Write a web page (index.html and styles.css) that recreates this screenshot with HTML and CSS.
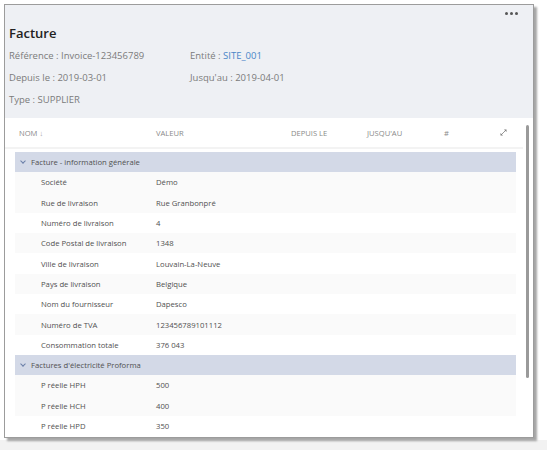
FILE: index.html
```html
<!DOCTYPE html>
<html lang="fr">
<head>
    <meta charset="UTF-8">
    <meta name="viewport" content="width=device-width, initial-scale=1.0">
    <title>Facture</title>

    <link rel="stylesheet" href="styles.css">
</head>
<body>
    <div id="panel">
        <div id="panel-head">
            <div class="menu-dots"><span></span><span></span><span></span></div>
            <h1>Facture</h1>
            <div class="info-grid">
                <div>Référence : Invoice-123456789</div>
                <div>Entité : <span class="link">SITE_001</span></div>
                <div>Depuis le : 2019-03-01</div>
                <div>Jusqu'au : 2019-04-01</div>
                <div>Type : SUPPLIER</div>
            </div>
        </div>

        <div id="table-card">
            <div class="table-header">
                <div>NOM <span class="sort">&#8595;</span></div>
                <div>VALEUR</div>
                <div>DEPUIS LE</div>
                <div>JUSQU'AU</div>
                <div>#</div>
                <div class="expand">
                    <svg width="7" height="7" viewBox="0 0 7 7">
                        <path d="M1.5 5.5 L5.5 1.5" fill="none" stroke="#999" stroke-width="1"/>
                        <path d="M4 0.5 H6.5 V3 Z M0.5 4 V6.5 H3 Z" fill="#777"/>
                    </svg>
                </div>
            </div>

            <div class="table-body">
                <div class="group"><span class="chevron"></span>Facture - information générale</div>
                <div class="row"><div>Société</div><div>Démo</div></div>
                <div class="row"><div>Rue de livraison</div><div>Rue Granbonpré</div></div>
                <div class="row"><div>Numéro de livraison</div><div>4</div></div>
                <div class="row"><div>Code Postal de livraison</div><div>1348</div></div>
                <div class="row"><div>Ville de livraison</div><div>Louvain-La-Neuve</div></div>
                <div class="row"><div>Pays de livraison</div><div>Belgique</div></div>
                <div class="row"><div>Nom du fournisseur</div><div>Dapesco</div></div>
                <div class="row"><div>Numéro de TVA</div><div>123456789101112</div></div>
                <div class="row"><div>Consommation totale</div><div>376 043</div></div>
                <div class="group"><span class="chevron"></span>Factures d'électricité Proforma</div>
                <div class="row"><div>P réelle HPH</div><div>500</div></div>
                <div class="row"><div>P réelle HCH</div><div>400</div></div>
                <div class="row"><div>P réelle HPD</div><div>350</div></div>
            </div>

            <div class="scrollbar"></div>
        </div>
    </div>
</body>
</html>
```

FILE: styles.css
```css
body, html {
    padding: 0;
    margin: 0;
}

body {
    height: 450px;
    overflow: hidden;
    font-family: "Open Sans", "Liberation Sans", sans-serif;
    background: linear-gradient(to bottom, #ffffff 0, #ffffff 440px, #f2f2f2 440px);
}

#panel {
    position: relative;
    margin: 4px 0 0 4px;
    width: 528px;
    height: 432px;
    border: 1px solid #9c9c9c;
    background-color: #eef0f4;
    box-shadow: 3px 3px 2px rgba(0, 0, 0, 0.35);
    display: flex;
    flex-direction: column;
    overflow: hidden;
}

#panel-head {
    padding: 17px 4px 0 4px;
    height: 96px;
}

.menu-dots {
    position: absolute;
    top: 7px;
    right: 15px;
    display: flex;
    gap: 2px;
}

.menu-dots span {
    width: 3px;
    height: 3px;
    border-radius: 50%;
    background-color: #555;
}

h1 {
    margin: 0;
    font-size: 13px;
    font-weight: 600;
    color: #222;
    line-height: 22px;
}

.info-grid {
    display: grid;
    grid-template-columns: 181px auto;
    grid-auto-rows: 22px;
    margin-top: 1px;
    font-size: 9.5px;
    color: #7b7b7b;
    line-height: 22px;
}

.info-grid .link {
    color: #4a86c8;
}

#table-card {
    position: relative;
    flex: 1;
    background-color: #fff;
}

.table-header {
    display: grid;
    grid-template-columns: 137px 135px 76px 77px 56px auto;
    height: 29px;
    padding-left: 14px;
    margin-right: 10px;
    align-items: center;
    border-bottom: 2px solid #f3f3f3;
    font-size: 7.6px;
    color: #8a8a8a;
}

.table-header .sort {
    color: #aaa;
}

.table-header .expand {
    display: flex;
}

.table-body {
    margin: 3px 17px 0 10px;
}

.group {
    height: 20.3px;
    display: flex;
    align-items: center;
    background-color: #d3d9e7;
    font-size: 7.7px;
    color: #505050;
}

.chevron {
    width: 3px;
    height: 3px;
    margin: -2px 6px 0 6px;
    border-right: 1px solid #6a7fa8;
    border-bottom: 1px solid #6a7fa8;
    transform: rotate(45deg);
}

.row {
    display: grid;
    grid-template-columns: 115px auto;
    height: 20.3px;
    align-items: center;
    padding-left: 26px;
    font-size: 7.7px;
    color: #505050;
}

.row:nth-child(odd) {
    background-color: #fafafa;
}

.group + .row {
    background-color: #fafafa;
}

.scrollbar {
    position: absolute;
    top: 7px;
    right: 4px;
    width: 3px;
    height: 253px;
    border-radius: 2px;
    background-color: #9a9a9a;
}
```
